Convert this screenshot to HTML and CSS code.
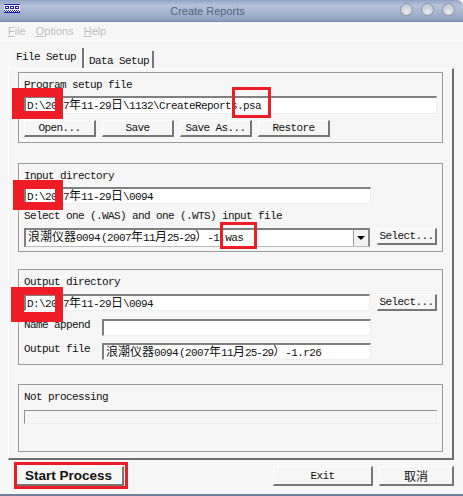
FILE: index.html
```html
<!DOCTYPE html>
<html lang="en">
<head>
  <meta charset="UTF-8" />
  <title>Create Reports</title>
  <link rel="stylesheet" href="styles.css">
</head>
<body>
  <div class="window">
    <div class="titlebar">
      <svg class="app-icon" width="16" height="9" viewBox="0 0 16 9">
        <rect width="16" height="9" fill="#fff"/>
        <rect width="16" height="1" fill="#1a1ab0"/>
        <rect x="1.5" y="2.5" width="3" height="2" fill="none" stroke="#1a1ab0"/>
        <rect x="6.5" y="2.5" width="3" height="2" fill="none" stroke="#1a1ab0"/>
        <rect x="11.5" y="2.5" width="3" height="2" fill="none" stroke="#1a1ab0"/>
        <rect y="8" width="16" height="1" fill="#1a1ab0"/>
        <path d="M0 6.5h16" stroke="#1a1ab0" stroke-dasharray="1 1"/>
        <path d="M1 7.5h15" stroke="#1a1ab0" stroke-dasharray="1 1"/>
      </svg>
      <span class="title">Create Reports</span>
      <div class="win-buttons">
        <span class="win-btn"></span>
        <span class="win-btn"></span>
        <span class="win-btn"></span>
      </div>
    </div>

    <div class="menu">
      <span class="menu-item"><u>F</u>ile</span>
      <span class="menu-item"><u>O</u>ptions</span>
      <span class="menu-item"><u>H</u>elp</span>
    </div>

    <div class="tabs">
      <span class="tab active">File Setup</span>
      <span class="tab">Data Setup</span>
    </div>

    <div class="panel">
      <div class="group group-program">
        <div class="label">Program setup file</div>
        <div class="field field-wide">D:\2007<span class="cjk">年</span>11-29<span class="cjk">日</span>\1132\CreateReports.psa</div>
        <div class="button-row">
          <button class="btn btn-std">Open...</button>
          <button class="btn btn-std">Save</button>
          <button class="btn btn-std">Save As...</button>
          <button class="btn btn-std">Restore</button>
        </div>
      </div>

      <div class="group group-input">
        <div class="label">Input directory</div>
        <div class="field field-mid">D:\2007<span class="cjk">年</span>11-29<span class="cjk">日</span>\0094</div>
        <div class="label label-select">Select one (.WAS) and one (.WTS) input file</div>
        <div class="row">
          <div class="field field-mid field-name combo">
            <span><span class="cjk">浪潮仪器</span>0094<span class="paren">(</span>2007<span class="cjk">年</span>11<span class="cjk">月</span><span class="tight">25-29</span><span class="cjk">）</span>-1.was</span>
            <span class="combo-arrow"></span>
          </div>
          <button class="btn btn-select">Select...</button>
        </div>
      </div>

      <div class="group group-output">
        <div class="label">Output directory</div>
        <div class="row">
          <div class="field field-mid">D:\2007<span class="cjk">年</span>11-29<span class="cjk">日</span>\0094</div>
          <button class="btn btn-select">Select...</button>
        </div>
        <div class="row row-name">
          <span class="label label-side">Name append</span>
          <div class="field field-short"></div>
        </div>
        <div class="row row-file">
          <span class="label label-side">Output file</span>
          <div class="field field-short field-name"><span class="cjk">浪潮仪器</span>0094<span class="paren">(</span>2007<span class="cjk">年</span>11<span class="cjk">月</span><span class="tight">25-29</span><span class="cjk">）</span>-1.r26</div>
        </div>
      </div>

      <div class="group group-status">
        <div class="label">Not processing</div>
        <div class="field field-wide progress"></div>
      </div>
    </div>

    <div class="footer">
      <button class="btn btn-start">Start Process</button>
      <div class="footer-right">
        <button class="btn btn-exit">Exit</button>
        <button class="btn btn-cancel">取消</button>
      </div>
    </div>
  </div>

  <!-- red markup drawn over the screenshot -->
  <div class="mark mark-a1"></div>
  <div class="mark mark-a2"></div>
  <div class="mark mark-b1"></div>
  <div class="mark mark-b2"></div>
  <div class="mark mark-c1"></div>
  <div class="mark mark-start"></div>
</body>
</html>
```

FILE: styles.css
```css
* {
  box-sizing: border-box;
}

body {
  margin: 0;
  width: 463px;
  height: 496px;
  overflow: hidden;
  background: repeating-conic-gradient(#f4f4f4 0 25%, #f8f8f8 0 50%) 0 0 / 2px 2px;
  font-family: 'Liberation Mono', 'Noto Sans CJK SC', monospace;
  font-size: 11px;
  letter-spacing: -0.6px;
  color: #111;
}

.window {
  width: 463px;
  height: 496px;
  display: flex;
  flex-direction: column;
  border-bottom: 2px solid #6f7f9c;
}

.titlebar {
  height: 22px;
  flex: none;
  display: flex;
  align-items: center;
  justify-content: center;
  padding-right: 48px;
  position: relative;
  background: linear-gradient(to bottom, #8fa3c4 0, #b4c2d8 25%, #a5b5cf 60%, #8c9fbf 100%);
  border-bottom: 1px solid #7b8aa6;
  border-top-right-radius: 6px;
}

.app-icon {
  position: absolute;
  left: 4px;
  top: 4px;
}

.title {
  font-family: 'Liberation Sans', sans-serif;
  font-size: 11px;
  letter-spacing: 0;
  color: #56647c;
}

.win-buttons {
  position: absolute;
  right: 8px;
  top: 3px;
  display: flex;
  gap: 8px;
}

.win-btn {
  width: 13px;
  height: 13px;
  border-radius: 50%;
  border: 1px solid #8a96a8;
  background: radial-gradient(circle at 50% 70%, #e8ebee, #b4bcc6);
}

.menu {
  height: 19px;
  flex: none;
  display: flex;
  gap: 10px;
  padding: 3px 0 0 8px;
  font-family: 'Liberation Sans', sans-serif;
  font-size: 11px;
  letter-spacing: 0;
  color: #bcbcbc;
  text-shadow: 1px 1px 0 #fff;
  border-bottom: 1px solid #fff;
}

.tabs {
  height: 27px;
  flex: none;
  display: flex;
  align-items: flex-end;
  padding-left: 9px;
}

.tab {
  height: 17px;
  width: 70px;
  padding: 4px 0 0 4px;
  border-left: 1px solid #fff;
  border-right: 2px solid #777;
  white-space: pre;
}

.tab.active {
  height: 20px;
  width: 75px;
  padding: 3px 0 0 6px;
}

.panel {
  width: 446px;
  height: 392px;
  flex: none;
  margin-left: 8px;
  padding: 3px 9px 0 9px;
  border-left: 1px solid #fff;
  border-right: 2px solid #6e6e6e;
  border-bottom: 2px solid #6e6e6e;
  border-top: 1px solid #fff;
}

.group {
  width: 425px;
  padding: 6px 5px 0;
  border: 1px solid #9b9b9b;
}

.group-program {
  height: 71px;
}

.group-input {
  height: 89px;
  margin-top: 20px;
}

.group-output {
  height: 96px;
  margin-top: 17px;
}

.group-status {
  height: 68px;
  margin-top: 19px;
}

.label {
  height: 12px;
  line-height: 12px;
  white-space: pre;
}

.label-select {
  margin-top: 6px;
}

.label-side {
  width: 78px;
  flex: none;
}

.field {
  height: 17px;
  line-height: 15px;
  padding-left: 1px;
  background: #fff;
  border-top: 2px solid #808080;
  border-left: 2px solid #808080;
  border-right: 1px solid #eee;
  border-bottom: 1px solid #eee;
  white-space: nowrap;
  overflow: hidden;
}

.field-name {
  padding-left: 2px;
}

.cjk {
  font-family: 'Noto Sans CJK SC', sans-serif;
  font-size: 12px;
  letter-spacing: 0;
  line-height: 1;
}

.paren {
  margin-left: 1px;
}

.tight {
  letter-spacing: -1px;
}

.field-wide {
  width: 413px;
  margin-top: 5px;
  height: 18px;
}

.field-mid {
  width: 347px;
}

.group-input > .field-mid {
  margin-top: 5px;
}

.field-short {
  width: 269px;
}

.button-row {
  display: flex;
  gap: 6px;
  margin-top: 6px;
}

.row {
  display: flex;
  align-items: flex-start;
  gap: 7px;
}

.group-input .row {
  margin-top: 6px;
}

.group-output .row {
  margin-top: 6px;
}

.group-output .row-name {
  margin-top: 8px;
  gap: 0;
}

.group-output .row-file {
  margin-top: 7px;
  gap: 0;
}

.combo {
  height: 19px;
  display: flex;
  justify-content: space-between;
  padding-right: 0;
  border-right: 2px solid #888;
  border-bottom: 1px solid #bbb;
}

.combo-arrow {
  width: 15px;
  height: 16px;
  background: #f2f2f2;
  border-left: 1px solid #999;
  position: relative;
}

.combo-arrow::after {
  content: "";
  position: absolute;
  left: 3px;
  top: 6px;
  border-left: 4px solid transparent;
  border-right: 4px solid transparent;
  border-top: 4px solid #000;
}

.progress {
  height: 14px;
  margin-top: 7px;
  background: transparent;
  border-top: 1px solid #8f8f8f;
  border-left: 1px solid #8f8f8f;
}

.btn {
  height: 17px;
  padding: 0;
  font-family: inherit;
  font-size: 11px;
  letter-spacing: -0.6px;
  color: #111;
  background: #f6f6f6;
  border: none;
  border-top: 1px solid #fff;
  border-left: 1px solid #fff;
  border-right: 2px solid #777;
  border-bottom: 2px solid #777;
}

.btn-std {
  width: 72px;
}

.btn-select {
  width: 60px;
}

.footer {
  flex: none;
  display: flex;
  justify-content: space-between;
  padding: 6px 9px 0 14px;
}

.footer-right {
  display: flex;
  gap: 6px;
}

.btn-start {
  width: 110px;
  height: 20px;
  font-family: 'Liberation Sans', sans-serif;
  font-size: 13.5px;
  letter-spacing: 0;
  font-weight: bold;
}

.btn-exit {
  width: 100px;
  height: 20px;
}

.btn-cancel {
  width: 75px;
  height: 20px;
  font-family: 'Noto Sans CJK SC', sans-serif;
  font-size: 12px;
  letter-spacing: 0;
}

.mark {
  position: absolute;
  border: 3px solid #ee1c25;
}

.mark-a1 {
  left: 12px;
  top: 88px;
  width: 51px;
  height: 31px;
  border-width: 9px 8px 8px 12px;
}

.mark-a2 {
  left: 232px;
  top: 87px;
  width: 39px;
  height: 31px;
}

.mark-b1 {
  left: 13px;
  top: 180px;
  width: 50px;
  height: 30px;
  border-width: 9px 8px 8px 11px;
}

.mark-b2 {
  left: 220px;
  top: 222px;
  width: 37px;
  height: 27px;
}

.mark-c1 {
  left: 11px;
  top: 287px;
  width: 52px;
  height: 35px;
  border-width: 8px 8px 10px 13px;
}

.mark-start {
  left: 14px;
  top: 462px;
  width: 114px;
  height: 27px;
}
```
